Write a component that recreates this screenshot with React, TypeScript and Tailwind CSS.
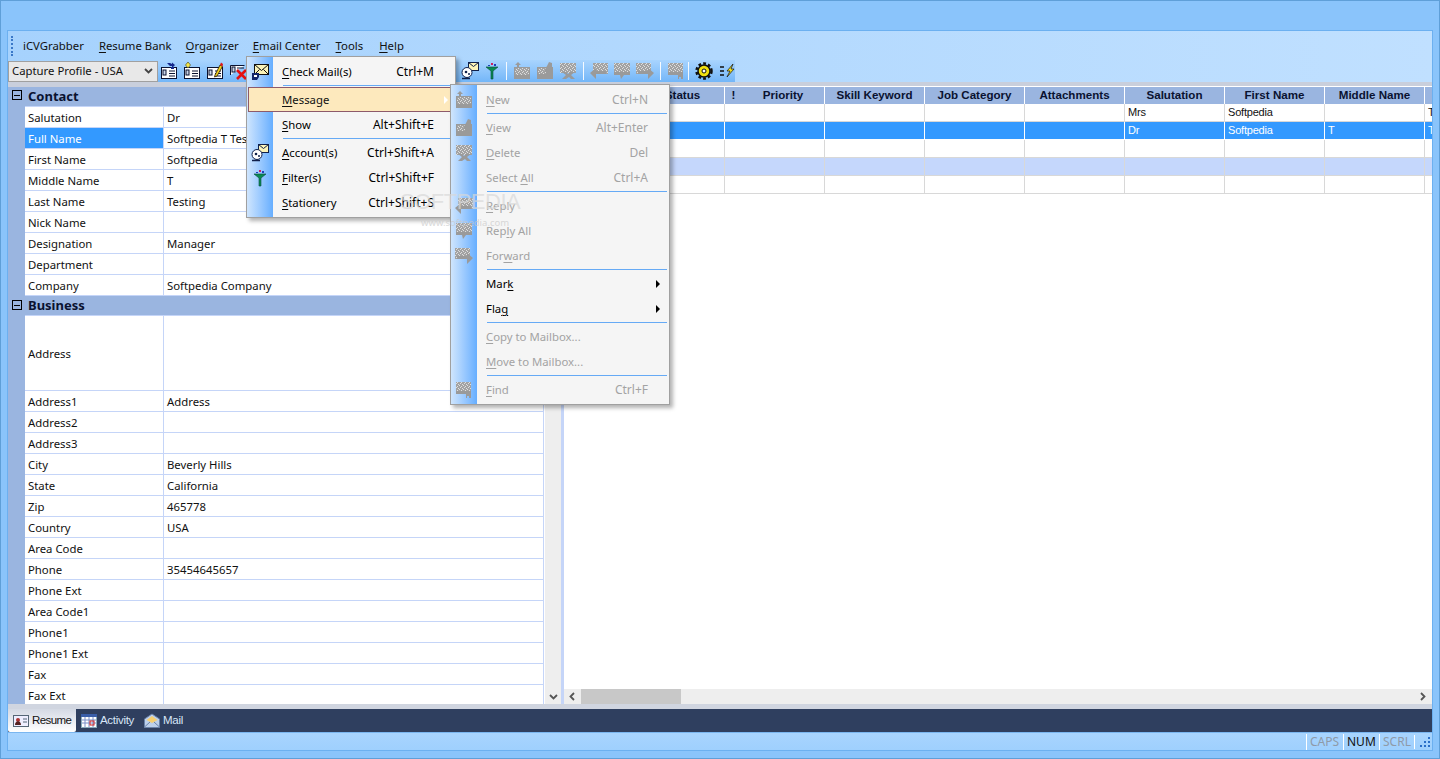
import type { ReactNode } from "react";

const contactRows = [
  ["Salutation", "Dr"],
  ["Full Name", "Softpedia T Testing"],
  ["First Name", "Softpedia"],
  ["Middle Name", "T"],
  ["Last Name", "Testing"],
  ["Nick Name", ""],
  ["Designation", "Manager"],
  ["Department", ""],
  ["Company", "Softpedia Company"],
];

const businessRows = [
  ["Address1", "Address"],
  ["Address2", ""],
  ["Address3", ""],
  ["City", "Beverly Hills"],
  ["State", "California"],
  ["Zip", "465778"],
  ["Country", "USA"],
  ["Area Code", ""],
  ["Phone", "35454645657"],
  ["Phone Ext", ""],
  ["Area Code1", ""],
  ["Phone1", ""],
  ["Phone1 Ext", ""],
  ["Fax", ""],
  ["Fax Ext", ""],
];

const emptyRow = ["", "", "", "", "", "", "", ""];

function Key({ first, rest }: { first: string; rest: string }) {
  return (
    <span>
      <span className="underline underline-offset-2">{first}</span>
      {rest}
    </span>
  );
}

// greyed out toolbar/menu glyphs, dithered like the old 16 colour bitmaps
function DimIcon({ kind }: { kind: string }) {
  const fill = "url(#dither)";
  return (
    <svg width="18" height="18" viewBox="0 0 18 18" className="shrink-0">
      <defs>
        <pattern id="dither" width="4" height="4" patternUnits="userSpaceOnUse">
          <rect width="4" height="4" fill="#a2a2a2" />
          <path d="M0 0h1v1H0zM2 1h1v1H2zM1 2h1v1H1zM3 3h1v1H3z" fill="#dedede" />
        </pattern>
      </defs>
      {kind === "new" && (
        <>
          <path d="M5 0l3 3H6v3H4V3H2z" fill="#9a9a9a" />
          <rect x="1" y="5" width="16" height="12" fill="#9a9a9a" />
          <rect x="2" y="6" width="14" height="7" fill={fill} />
        </>
      )}
      {kind === "view" && (
        <>
          <rect x="1" y="5" width="16" height="12" fill="#9a9a9a" />
          <rect x="2" y="6" width="8" height="6" fill={fill} />
          <path d="M8 9l3-5 2-4 3 1v8l-3 3z" fill="#9a9a9a" />
        </>
      )}
      {kind === "del" && (
        <>
          <rect x="1" y="1" width="16" height="10" fill={fill} />
          <path d="M3 10h4l2 2 2-2h5l-4 3 4 4h-4l-2-2-3 2H3l4-4z" fill="#9a9a9a" />
        </>
      )}
      {kind === "reply" && (
        <>
          <rect x="3" y="1" width="15" height="11" fill={fill} />
          <path d="M0 11l6-5v3h10v3H6v5z" fill="#9a9a9a" />
        </>
      )}
      {kind === "all" && (
        <>
          <rect x="1" y="1" width="16" height="11" fill={fill} />
          <path d="M1 10h16v3h-6l-3 4-1-4H1z" fill="#9a9a9a" />
        </>
      )}
      {kind === "fwd" && (
        <>
          <rect x="0" y="1" width="15" height="11" fill={fill} />
          <path d="M18 11l-6-5v3H2v3h10v5z" fill="#9a9a9a" />
        </>
      )}
      {kind === "find" && (
        <>
          <rect x="1" y="1" width="15" height="11" fill={fill} />
          <path d="M1 10h15v7h-2v-2h-2v2h-1v-4H1z" fill="#9a9a9a" />
        </>
      )}
    </svg>
  );
}

function CheckIcon() {
  return (
    <svg width="18" height="18" viewBox="0 0 18 18" className="shrink-0">
      <rect x="3.500" y="1.500" width="14" height="10" fill="#fbf3b8" stroke="#111" />
      <path d="M3.500 1.500l7 6 7-6M3.500 11.500l5-5M17.500 11.500l-5-5" fill="none" stroke="#111" />
      <path d="M1 10h7v4l-2 3H1z" fill="#11246a" />
      <path d="M3 12h3v2H3z" fill="#fff" />
    </svg>
  );
}

function CardIcon({ kind }: { kind: string }) {
  return (
    <svg width="18" height="18" viewBox="0 0 18 18" className="shrink-0">
      {kind !== "del" ? (
        <rect x="1.500" y="5.500" width="15" height="11" fill="#fff" stroke="#0a1230" />
      ) : (
        <path d="M1.500 13V3.500h14" fill="#fff" stroke="#0a1230" />
      )}
      <rect x="3" y={kind === "del" ? 5 : 8} width="3" height="5" fill="#c8d4e8" stroke="#0a1230" />
      {kind !== "del" && <path d="M9 9h6M9 11.500h6M9 14h6" stroke="#0a1230" />}
      {kind === "del" && <path d="M8 6h7" stroke="#0a1230" />}
      {kind === "in" && <path d="M7 1h3l2 1V.5L15 3l-3 3V4h-2zM11 5h3v2h-3z" fill="#14288c" />}
      {kind === "add" && <path d="M5 0l2.500 3L5 6 2.500 3z" fill="#f7e84a" stroke="#55501c" strokeWidth=".7" />}
      {kind === "edit" && (
        <>
          <path d="M9 13l5-10 2.500 1.500L11 14l-2.500 1z" fill="#f4d21e" stroke="#231800" strokeWidth=".8" />
          <path d="M14 3l1-2.500 2 1.500-.5 2.500z" fill="#e01818" />
        </>
      )}
      {kind === "del" && <path d="M8 8l9 9M17 8l-9 9" stroke="#e61010" strokeWidth="2.600" />}
    </svg>
  );
}

function AccountIcon() {
  return (
    <svg width="18" height="18" viewBox="0 0 18 18" className="shrink-0">
      <rect x="7.500" y=".5" width="10" height="8" fill="#fbf3b8" stroke="#10204a" />
      <path d="M7.500 .5l5 4 5-4" fill="none" stroke="#10204a" />
      <circle cx="6" cy="10.500" r="5" fill="#fff" stroke="#10204a" />
      <circle cx="5" cy="10" r="1.300" fill="#10204a" />
      <circle cx="8" cy="12" r="1" fill="#10204a" />
      <path d="M1 16.500h8" stroke="#10204a" strokeWidth="1.500" />
    </svg>
  );
}

function FilterIcon() {
  return (
    <svg width="16" height="18" viewBox="0 0 16 18" className="shrink-0">
      <path d="M2 5h12L9 9v8H7V9z" fill="#0a8a50" stroke="#064a40" strokeWidth=".6" />
      <path d="M7 1h2v2H7z" fill="#d02060" />
      <path d="M4 3h2v1H4zM10 2h2v2h-2z" fill="#2040c0" />
    </svg>
  );
}

function GearIcon() {
  return (
    <svg width="18" height="18" viewBox="0 0 18 18" className="shrink-0">
      <circle cx="9" cy="9" r="6" fill="#f0e010" stroke="#101010" strokeWidth="1.500" />
      <circle cx="9" cy="9" r="7.500" fill="none" stroke="#101010" strokeWidth="2.500" strokeDasharray="2.800 2.100" />
      <circle cx="9" cy="9" r="2" fill="#fff" stroke="#101010" />
    </svg>
  );
}

function BoltIcon() {
  return (
    <svg width="18" height="18" viewBox="0 0 18 18" className="shrink-0">
      <path d="M2 5h4M2 9h4M2 13h4" stroke="#101010" strokeWidth="1.500" />
      <path d="M15 2l-6 7h3l-3 6 7-8h-3z" fill="#f4e020" stroke="#101010" strokeWidth=".7" />
    </svg>
  );
}

function Sep({ className = "mx-[1px]" }: { className?: string }) {
  return <span className={`h-[18px] w-px shrink-0 bg-white/90 ${className}`} />;
}

function PropertyRow({ name, value, active }: { name: string; value: string; active?: boolean }) {
  return (
    <div className="flex h-[21px] items-center border-b border-[#c5d5f8]">
      <div
        className={`flex h-full w-[139px] shrink-0 items-center border-r border-[#c5d5f8] pl-[3px] pt-[1px] ${
          active ? "bg-[#3399ff] text-white" : ""
        }`}
      >
        {name}
      </div>
      <div className="whitespace-nowrap pl-[3px] pt-[1px]">{value}</div>
    </div>
  );
}

function SectionHead({ title }: { title: string }) {
  return (
    <div className="flex h-[20px] items-center border-b border-[#c5d5f8] bg-[#9ab5e0] pl-[3px] text-[13px] font-bold text-[#0a1230]">
      {title}
    </div>
  );
}

function Minus({ className }: { className: string }) {
  return (
    <span className={`flex h-[10px] w-[10px] items-center justify-center border border-black ${className}`}>
      <span className="h-px w-[6px] bg-black" />
    </span>
  );
}

function MenuRow({
  label,
  hint,
  icon,
  off,
  arrow,
}: {
  label: ReactNode;
  hint?: string;
  icon?: ReactNode;
  off?: boolean;
  arrow?: boolean;
}) {
  return (
    <div className={`relative flex h-[25px] items-center ${off ? "text-[#a3a3a3]" : "text-black"}`}>
      <span className="flex w-[26px] items-center justify-center">{icon}</span>
      <span className="flex-1 pl-[9px]">{label}</span>
      {hint && <span className="pr-[21px] text-[12px]">{hint}</span>}
      {arrow && (
        <span className="absolute right-[9px] h-0 w-0 border-y-[4px] border-l-[4px] border-y-transparent border-l-black" />
      )}
    </div>
  );
}

function MenuSep() {
  return <div className="my-[1px] ml-[36px] mr-[2px] h-px bg-[#66aaf5]" />;
}

function EmailMenu() {
  return (
    <div className="absolute left-[245px] top-[55px] w-[210px] border border-[#a0a0a0] bg-[#f5f5f5] py-[2px] shadow-[3px_3px_4px_rgba(0,0,0,0.3)]">
      <div className="absolute bottom-0 left-0 top-0 w-[26px] bg-gradient-to-r from-[#cfe5fd] to-[#66aeff]" />
      <div className="relative">
        <MenuRow label={<Key first="C" rest="heck Mail(s)" />} hint="Ctrl+M" icon={<CheckIcon />} />
        <MenuSep />
        <div className="relative ml-[1px] h-[25px] border border-[#8d5a6a] bg-[#fde9bd]">
          <div className="flex h-full items-center pl-[33px]">
            <Key first="M" rest="essage" />
          </div>
          <span className="absolute right-[6px] top-[8px] h-0 w-0 border-y-[4px] border-l-[4px] border-y-transparent border-l-white" />
        </div>
        <MenuRow label={<Key first="S" rest="how" />} hint="Alt+Shift+E" />
        <MenuSep />
        <MenuRow label={<Key first="A" rest="ccount(s)" />} hint="Ctrl+Shift+A" icon={<AccountIcon />} />
        <MenuRow label={<Key first="F" rest="ilter(s)" />} hint="Ctrl+Shift+F" icon={<FilterIcon />} />
        <MenuRow label={<Key first="S" rest="tationery" />} hint="Ctrl+Shift+S" />
      </div>
    </div>
  );
}

function MessageMenu() {
  return (
    <div className="absolute left-[449px] top-[83px] w-[220px] border border-[#a0a0a0] bg-[#f5f5f5] py-[2px] shadow-[3px_3px_4px_rgba(0,0,0,0.3)]">
      <div className="absolute bottom-0 left-0 top-0 w-[26px] bg-gradient-to-r from-[#cfe5fd] to-[#66aeff]" />
      <div className="relative">
        <MenuRow off label={<Key first="N" rest="ew" />} hint="Ctrl+N" icon={<DimIcon kind="new" />} />
        <MenuSep />
        <MenuRow off label={<Key first="V" rest="iew" />} hint="Alt+Enter" icon={<DimIcon kind="view" />} />
        <MenuRow off label={<Key first="D" rest="elete" />} hint="Del" icon={<DimIcon kind="del" />} />
        <MenuRow off label={<span>Select <Key first="A" rest="ll" /></span>} hint="Ctrl+A" />
        <MenuSep />
        <MenuRow off label={<Key first="R" rest="eply" />} icon={<DimIcon kind="reply" />} />
        <MenuRow off label={<span>Rep<Key first="l" rest="y All" /></span>} icon={<DimIcon kind="all" />} />
        <MenuRow off label={<span>For<Key first="w" rest="ard" /></span>} icon={<DimIcon kind="fwd" />} />
        <MenuSep />
        <MenuRow label={<span>Mar<Key first="k" rest="" /></span>} arrow />
        <MenuRow label={<span>Fla<Key first="g" rest="" /></span>} arrow />
        <MenuSep />
        <MenuRow off label={<Key first="C" rest="opy to Mailbox..." />} />
        <MenuRow off label={<Key first="M" rest="ove to Mailbox..." />} />
        <MenuSep />
        <MenuRow off label={<Key first="F" rest="ind" />} hint="Ctrl+F" icon={<DimIcon kind="find" />} />
      </div>
    </div>
  );
}

function HeaderCell({ title, w = "w-[100px]", plain }: { title: string; w?: string; plain?: boolean }) {
  return (
    <div
      className={`flex h-[18px] shrink-0 items-center justify-center border-t border-white bg-[#9ab5e0] pb-[2px] font-['Liberation_Sans',sans-serif] text-[11.600px] font-bold text-[#0a1230] ${w} ${
        plain ? "" : "border-l"
      }`}
    >
      {title}
    </div>
  );
}

function GridRow({ cells, selected, shaded }: { cells: string[]; selected?: boolean; shaded?: boolean }) {
  const line = selected ? "border-white" : "border-[#d8d8d8]";
  return (
    <div
      className={`flex h-[18px] border-b pl-[160px] ${line} ${
        selected ? "bg-[#3399ff] text-white" : shaded ? "bg-[#c5d7fc]" : ""
      }`}
    >
      {cells.map((c, i) => (
        <div
          key={i}
          className={`h-full w-[100px] shrink-0 border-l pl-[3px] font-['Liberation_Sans',sans-serif] text-[11px] leading-[17px] tracking-[-0.200px] ${line}`}
        >
          {c}
        </div>
      ))}
    </div>
  );
}

export default function App() {
  return (
    <div className="relative h-[759px] w-[1440px] overflow-hidden border border-[#5f9fd8] bg-[#8ac4fb] font-['Noto_Sans',sans-serif] text-[11.350px] text-[#111]">
      <div className="ml-[6px] mt-[29px] flex h-[721px] w-[1426px] flex-col border border-[#6cb0f0] bg-[#c9cfdc]">
        {/* menu + toolbar */}
        <div className="h-[51px] shrink-0 bg-gradient-to-r from-[#a6d2fd] to-[#c0e0ff]">
          <div className="flex h-[29px] items-center pl-[3px] pt-[1px]">
            <span className="mr-[10px] h-[20px] w-[2px] border-l-2 border-dotted border-[#3a78c8]" />
            <span className="mr-[15px]">iCVGrabber</span>
            <span className="mr-[14px]"><Key first="R" rest="esume Bank" /></span>
            <span className="mr-[14px]"><Key first="O" rest="rganizer" /></span>
            <span className="mr-[15px]"><Key first="E" rest="mail Center" /></span>
            <span className="mr-[16px]"><Key first="T" rest="ools" /></span>
            <span><Key first="H" rest="elp" /></span>
          </div>
          <div className="flex h-[22px] w-[727px] items-center bg-gradient-to-b from-[#a8d4fe] to-[#73b6f8]">
            <div className="flex h-[21px] w-[150px] shrink-0 items-center justify-between border border-[#a0a0a0] bg-[#e8e8e8] pl-[3px] pr-[4px]">
              <span className="whitespace-nowrap">Capture Profile - USA</span>
              <svg width="9" height="6" viewBox="0 0 9 6"><path d="M1 1l3.500 3.500L8 1" fill="none" stroke="#444" strokeWidth="1.800" /></svg>
            </div>
            <div className="ml-[2px] flex items-center gap-[5px]">
              <CardIcon kind="in" />
              <CardIcon kind="add" />
              <CardIcon kind="edit" />
              <CardIcon kind="del" />
            </div>
            <div className="ml-[214px] flex items-center gap-[5px]">
              <AccountIcon />
              <FilterIcon />
              <Sep />
              <DimIcon kind="new" />
              <DimIcon kind="view" />
              <DimIcon kind="del" />
              <Sep />
              <DimIcon kind="reply" />
              <DimIcon kind="all" />
              <DimIcon kind="fwd" />
              <Sep />
              <DimIcon kind="find" />
              <Sep className="-ml-[2px] mr-[1px]" />
              <GearIcon />
              <BoltIcon />
            </div>
          </div>
        </div>

        {/* panes */}
        <div className="mt-[4px] flex h-[618px] shrink-0 overflow-hidden">
          <div className="mt-[1px] flex w-[17px] shrink-0 flex-col bg-[#9ab5e0] pl-[4px]">
            <Minus className="mt-[3px]" />
            <Minus className="mt-[200px]" />
          </div>
          <div className="mt-[1px] w-[520px] shrink-0 bg-white pr-[1px]">
            <div className="h-full overflow-hidden border-r border-[#c5d5f8]">
              <SectionHead title="Contact" />
              {contactRows.map(([n, v]) => (
                <PropertyRow key={n} name={n} value={v} active={n === "Full Name"} />
              ))}
              <SectionHead title="Business" />
              <div className="flex h-[75px] items-center border-b border-[#c5d5f8]">
                <div className="flex h-full w-[139px] items-center border-r border-[#c5d5f8] pl-[3px] pt-[2px]">Address</div>
              </div>
              {businessRows.map(([n, v]) => (
                <PropertyRow key={n} name={n} value={v} />
              ))}
            </div>
          </div>
          <div className="flex w-[16px] shrink-0 flex-col justify-end bg-[#eeeeee]">
            <div className="flex h-[15px] items-center justify-center">
              <svg width="9" height="6" viewBox="0 0 9 6"><path d="M1 1l3.500 3.500L8 1" fill="none" stroke="#555" strokeWidth="1.800" /></svg>
            </div>
          </div>
          <div className="w-[3px] shrink-0 bg-[#c5d5f8]" />
          <div className="flex min-w-0 flex-1 flex-col bg-white">
            <div className="flex-1 overflow-hidden">
              <div className="flex pl-[76px]">
                <HeaderCell title="Status" w="w-[84px]" />
                <HeaderCell title="!" w="w-[18px]" />
                <HeaderCell title="Priority" w="w-[82px]" plain />
                <HeaderCell title="Skill Keyword" />
                <HeaderCell title="Job Category" />
                <HeaderCell title="Attachments" />
                <HeaderCell title="Salutation" />
                <HeaderCell title="First Name" />
                <HeaderCell title="Middle Name" />
                <HeaderCell title="" />
              </div>
              <GridRow cells={["", "", "", "", "Mrs", "Softpedia", "", "T"]} />
              <GridRow selected cells={["", "", "", "", "Dr", "Softpedia", "T", "T"]} />
              <GridRow cells={emptyRow} />
              <GridRow shaded cells={emptyRow} />
              <GridRow cells={emptyRow} />
            </div>
            <div className="flex h-[15px] shrink-0 items-center justify-between bg-[#eeeeee] pl-[5px] pr-[6px]">
              <svg width="6" height="9" viewBox="0 0 6 9"><path d="M5 1L1.500 4.500 5 8" fill="none" stroke="#555" strokeWidth="1.800" /></svg>
              <div className="ml-[6px] mr-auto h-full w-[100px] bg-[#c8c8c8]" />
              <svg width="6" height="9" viewBox="0 0 6 9"><path d="M1 1l3.500 3.500L1 8" fill="none" stroke="#555" strokeWidth="1.800" /></svg>
            </div>
          </div>
        </div>

        {/* tabs */}
        <div className="h-[5px] shrink-0 bg-[#d0d5e0]" />
        <div className="flex h-[23px] shrink-0 items-center bg-[#2f3f5f] font-['Liberation_Sans',sans-serif] text-[11.500px] tracking-[-0.300px] text-[#d8e6f8]">
          <div className="flex h-full w-[68px] items-center gap-[3px] rounded-b-[2px] bg-gradient-to-b from-[#d4d9e4] to-white pl-[5px] tracking-[-0.600px] text-[#111]">
            <svg width="16" height="14" viewBox="0 0 16 14"><rect x=".5" y="1.500" width="15" height="11" fill="#eef" stroke="#567" /><circle cx="5" cy="6" r="2" fill="#a33" /><path d="M2 11c0-5 6-5 6 0z" fill="#522" /><path d="M10 5h4M10 8h4" stroke="#567" /></svg>
            Resume
          </div>
          <div className="ml-[5px] flex items-center gap-[3px]">
            <svg width="16" height="14" viewBox="0 0 16 14"><rect x=".5" y=".5" width="15" height="13" fill="#fff" stroke="#8ab" /><path d="M0 1.500h16" stroke="#3a5ea8" strokeWidth="3" /><path d="M1 6h14M1 9h14M4 3v10M8 3v10M12 3v10" stroke="#7a8fc8" /><rect x="9" y="7" width="4" height="4" fill="none" stroke="#d02020" /></svg>
            Activity
          </div>
          <div className="ml-[10px] flex items-center gap-[3px]">
            <svg width="16" height="15" viewBox="0 0 16 15"><path d="M.5 6L8 1l7.500 5v8.500H.5z" fill="#bcd0ec" stroke="#6a82a8" /><path d="M2.500 7L8 3l5.500 4L8 10z" fill="#f6cf72" /><path d="M.5 14L6 9M15.500 14L10 9" stroke="#6a82a8" /></svg>
            Mail
          </div>
        </div>

        {/* status */}
        <div className="flex h-[18px] shrink-0 items-center justify-end border-t border-[#7ab6f0] bg-gradient-to-b from-[#a8d4fe] to-[#9fd0fd] pr-[2px] text-[12px] leading-[16px] text-[#111]">
          <span className="w-[37px] border-l border-white pl-[3px] text-[#8f9aa8]">CAPS</span>
          <span className="w-[36px] border-l border-white pl-[3px]">NUM</span>
          <span className="w-[35px] border-l border-white pl-[3px] text-[#8f9aa8]">SCRL</span>
          <span className="flex h-full w-[16px] items-center">
            <span className="mr-[5px] h-[14px] w-px bg-white" />
            <svg width="10" height="10" viewBox="0 0 10 10"><path d="M8 0h2v2H8zM4 4h2v2H4zM8 4h2v2H8zM0 8h2v2H0zM4 8h2v2H4zM8 8h2v2H8z" fill="#2a6fc8" /></svg>
          </span>
        </div>
      </div>

      <EmailMenu />
      <MessageMenu />
      <div className="pointer-events-none absolute left-[399px] top-[184px] font-['Liberation_Sans',sans-serif] text-[22px] tracking-[-0.500px] text-[#d8d8d8]/70">SOFTPEDIA</div>
      <div className="pointer-events-none absolute left-[420px] top-[215px] text-[9.500px] text-[#c8c8c8]/70">www.softpedia.com</div>
    </div>
  );
}
